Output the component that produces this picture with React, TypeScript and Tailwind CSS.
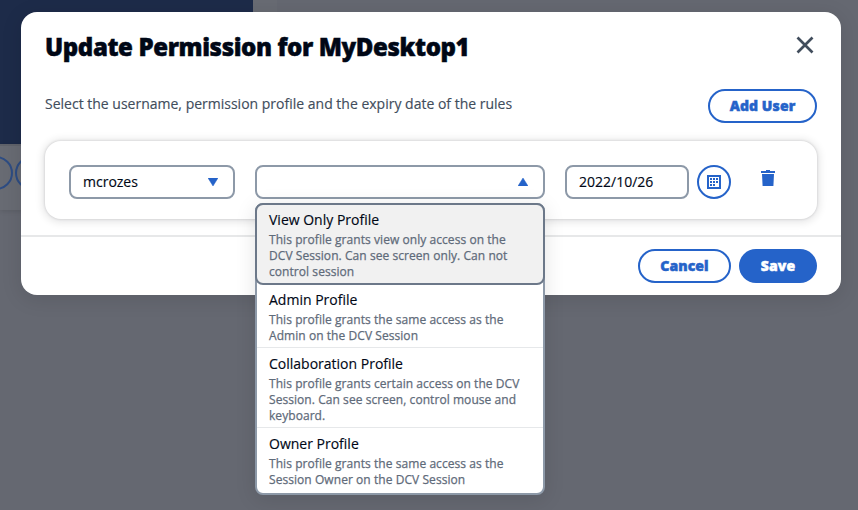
const profiles = [
  { name: 'View Only Profile', lines: ['This profile grants view only access on the', 'DCV Session. Can see screen only. Can not', 'control session'] },
  { name: 'Admin Profile', lines: ['This profile grants the same access as the', 'Admin on the DCV Session'] },
  { name: 'Collaboration Profile', lines: ['This profile grants certain access on the DCV', 'Session. Can see screen, control mouse and', 'keyboard.'] },
  { name: 'Owner Profile', lines: ['This profile grants the same access as the', 'Session Owner on the DCV Session'] },
];

function Backdrop() {
  return (
    <div className="flex h-[510px] w-[858px] flex-col overflow-hidden bg-[#656871]">
      <div className="flex h-[144px]">
        <div className="w-[253px] bg-[#1d2b49]" />
        <div className="w-6 bg-[#686b73]" />
      </div>
      <div className="h-[66px] w-[277px] border-t-2 border-[#5f626a] bg-[#686b73] shadow-[0_1px_5px_rgba(0,0,0,0.12)]">
        <div className="-ml-[21px] flex gap-0.5 pt-[10px]">
          <div className="size-[34px] rounded-full border-2 border-[#2d4c83]" />
          <div className="size-[34px] rounded-full border-2 border-[#2d4c83]" />
        </div>
      </div>
    </div>
  );
}

function Triangle({ up = false }: { up?: boolean }) {
  return (
    <svg width="10" height="8" viewBox="0 0 10 8" fill="#2563c9" stroke="#2563c9" strokeWidth="0.5">
      <path d={up ? 'M5 0 10 8H0z' : 'M0 0h10L5 8z'} />
    </svg>
  );
}

function Options() {
  return (
    <div className="absolute top-[38px] left-0 z-10 h-[292px] w-[290px] rounded-lg border-2 border-[#8d99a8] bg-white shadow-[0_4px_20px_1px_rgba(0,7,22,0.10)]">
      <div className="-mx-0.5 -mt-0.5">
        {profiles.map((p, i) => (
          <div
            key={p.name}
            className={
              i === 0
                ? 'h-[82px] rounded-lg border-2 border-[#6c7889] bg-[#f1f1f1] px-3 pt-1'
                : i === 3
                  ? 'mx-0.5 h-[64px] px-3 pt-[5px]'
                  : i === 1
                    ? 'mx-0.5 h-[63px] border-b border-[#e6e8ea] px-3 pt-1'
                    : 'mx-0.5 h-[80px] border-b border-[#e6e8ea] px-3 pt-[5px]'
            }
          >
            <div className="mb-px text-[14px] leading-[22px] text-[#000716] [-webkit-text-stroke:0.15px]">{p.name}</div>
            {p.lines.map((line) => (
              <div key={line} className="text-[12px] leading-4 tracking-[0.06px] whitespace-nowrap text-[#5f6b7a] [-webkit-text-stroke:0.25px]">{line}</div>
            ))}
          </div>
        ))}
      </div>
    </div>
  );
}

export default function App() {
  return (
    <div className="relative h-[510px] w-[858px] overflow-hidden font-['Open_Sans','Noto_Sans',sans-serif] text-[14px]">
      <Backdrop />
      <div className="absolute top-3 left-[21px] flex h-[283px] w-[820px] flex-col rounded-2xl bg-white shadow-[0_4px_20px_1px_rgba(0,7,22,0.10)]">
        <div className="flex h-[77px] items-start justify-between pt-[20px] pr-6 pl-6">
          <h1 className="text-[24px] leading-[30px] font-extrabold tracking-[-0.38px] whitespace-nowrap text-[#000716] [-webkit-text-stroke:0.5px]">Update Permission for MyDesktop1</h1>
          <svg className="mt-1 mr-[3px]" width="18" height="18" viewBox="0 0 18 18" fill="none" stroke="#414d5c" strokeWidth="2.7">
            <path d="m1.5 1.5 15 15M16.5 1.5l-15 15" />
          </svg>
        </div>
        <div className="flex h-[52px] items-start justify-between px-6">
          <p className="pt-1 leading-[22px] text-[#414d5c] [-webkit-text-stroke:0.15px]">Select the username, permission profile and the expiry date of the rules</p>
          <button className="h-[34px] w-[109px] rounded-full border-2 border-[#2563c9] pb-0.5 font-extrabold tracking-[0.1px] text-[#2563c9] [-webkit-text-stroke:0.5px]">Add User</button>
        </div>
        <div className="mx-6 flex h-[78px] items-start rounded-2xl bg-white pt-6 pl-6 shadow-[0_0_2px_1px_rgba(0,0,0,0.08),0_1px_8px_2px_rgba(0,7,22,0.11)]">
          <div className="flex h-[34px] w-[166px] items-center justify-between rounded-lg border-2 border-[#8d99a8] pr-[15px] pl-3 text-[#000716]">
            <span className="pb-0.5 [-webkit-text-stroke:0.15px]">mcrozes</span>
            <Triangle />
          </div>
          <div className="relative ml-5">
            <div className="flex h-[34px] w-[290px] items-center justify-end rounded-lg border-2 border-[#8d99a8] pr-[15px]">
              <Triangle up />
            </div>
            <Options />
          </div>
          <div className="ml-5 flex h-[34px] w-[124px] items-center rounded-lg border-2 border-[#8d99a8] pb-0.5 pl-3 text-[#000716] [-webkit-text-stroke:0.15px]">2022/10/26</div>
          <button className="ml-2 flex size-[34px] items-center justify-center rounded-full border-2 border-[#2563c9]">
            <svg width="14" height="14" viewBox="0 0 14 14" fill="#2563c9" shapeRendering="crispEdges">
              <path fillRule="evenodd" d="M0 0h14v14H0zM2 2v10h10V2z" />
              <path d="M6 3h2v2H6zM9 3h2v2H9zM3 6h2v2H3zM6 6h2v2H6zM9 6h2v2H9zM3 9h2v2H3zM6 9h2v2H6zM3 3h2v2H3z" />
            </svg>
          </button>
          <svg className="mt-[5px] ml-[30px]" width="14" height="16" viewBox="0 0 14 16" fill="#2563c9">
            <path d="M5 0h4v1h5v2H0V1h5zM1 4h12l-.6 12H1.6z" />
          </svg>
        </div>
        <div className="mt-4 flex h-[60px] justify-end gap-2 border-t-2 border-[#e7e8e9] pt-3 pr-6">
          <button className="h-[34px] w-[93px] rounded-full border-2 border-[#2563c9] pb-0.5 font-extrabold tracking-[0.1px] text-[#2563c9] [-webkit-text-stroke:0.5px]">Cancel</button>
          <button className="h-[34px] w-[78px] rounded-full bg-[#2563c9] pb-0.5 font-extrabold tracking-[0.1px] text-white [-webkit-text-stroke:0.5px]">Save</button>
        </div>
      </div>
    </div>
  );
}
